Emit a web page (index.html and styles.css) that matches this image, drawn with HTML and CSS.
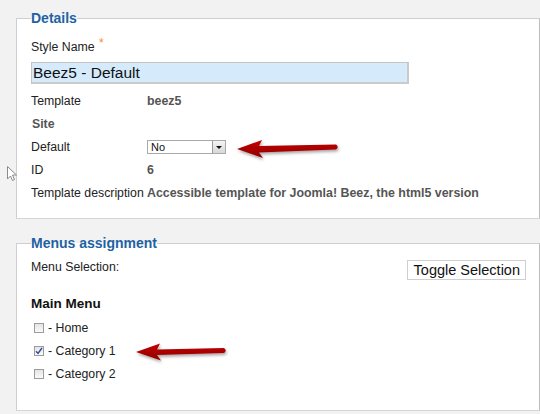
FILE: index.html
```html
<!DOCTYPE html>
<html>
<head>
<meta charset="utf-8">
<link rel="stylesheet" href="styles.css">
</head>
<body>
<div class="page">
  <fieldset class="box box-details">
    <legend>Details</legend>
    <div class="field-label">Style Name <span class="req">*</span></div>
    <div class="text-input">Beez5 - Default</div>
    <div class="grid">
      <div class="lbl">Template</div><div class="val">beez5</div>
      <div class="section">Site</div>
      <div class="lbl">Default</div>
      <div class="val">
        <div class="select"><span class="sel-text">No</span><span class="sel-btn"><span class="tri"></span></span></div>
      </div>
      <div class="lbl">ID</div><div class="val">6</div>
      <div class="lbl">Template description</div><div class="val">Accessible template for Joomla! Beez, the html5 version</div>
    </div>
  </fieldset>

  <fieldset class="box box-menus">
    <legend>Menus assignment</legend>
    <div class="sel-row">
      <div class="menu-sel">Menu Selection:</div>
      <div class="toggle">Toggle Selection</div>
    </div>
    <div class="menu-title">Main Menu</div>
    <ul class="items">
      <li><span class="cb"></span>- Home</li>
      <li><span class="cb checked"><svg width="8" height="8" viewBox="0 0 8 8"><path d="M1 4.2 L3 6.4 L7 1" fill="none" stroke="#2b4f9a" stroke-width="1.4"/></svg></span>- Category 1</li>
      <li><span class="cb"></span>- Category 2</li>
    </ul>
  </fieldset>
</div>

<svg class="overlay" width="540" height="414" viewBox="0 0 540 414">
  <defs>
    <linearGradient id="red" x1="0" y1="0" x2="0" y2="1">
      <stop offset="0" stop-color="#c40000"/>
      <stop offset="1" stop-color="#8f0000"/>
    </linearGradient>
    <filter id="sh" x="-20%" y="-50%" width="140%" height="200%">
      <feDropShadow dx="1" dy="2" stdDeviation="1.5" flood-color="#000" flood-opacity="0.35"/>
    </filter>
  </defs>
  <path d="M237,149 L262,140 L259,146 L336,144.5 Q339.5,147 336,149.5 L259,152.5 L263,158 Z" fill="url(#red)" filter="url(#sh)"/>
  <path d="M136,352 L160,343.5 L157,349.5 L224,348 Q227.5,350.5 224,353 L157,355 L161,360.5 Z" fill="url(#red)" filter="url(#sh)"/>
  <path d="M7.5,166.5 L7.5,179 L10.5,176 L12.5,180.5 L14.5,179.5 L12.5,175 L16.5,175 Z" fill="#fff" stroke="#8a8a8a" stroke-width="1" stroke-linejoin="round"/>
</svg>
</body>
</html>
```

FILE: styles.css
```css
html, body {
  margin: 0;
  padding: 0;
}
body {
  background: #f2f2f2;
  font-family: "Liberation Sans", Arial, sans-serif;
  color: #222;
  width: 540px;
  height: 414px;
  overflow: hidden;
  position: relative;
}
.page {
  padding: 10px 0 0 16px;
}
.box {
  margin: 0;
  background: #fff;
  border: 1px solid #cfcfcf;
  border-right-color: #bdbdbd;
  border-bottom-color: #d6d6d6;
  padding: 0 13px 0 14px;
  min-inline-size: 0;
}
.box legend {
  padding: 0;
  font-size: 14px;
  line-height: 16px;
  font-weight: bold;
  color: #1f62a3;
}
.box-details {
  padding-bottom: 14px;
}
.field-label {
  margin-top: 13px;
  font-size: 12.3px;
  line-height: 16px;
  color: #222;
}
.req {
  color: #f0922a;
  font-size: 12px;
  position: relative;
  top: -4px;
  margin-left: 1px;
}
.text-input {
  margin-top: 7px;
  width: 378px;
  height: 22px;
  box-sizing: border-box;
  background: #d5ebfc;
  border: 1px solid #c4c4c4;
  border-right: 2px solid #cacaca;
  border-bottom: 2px solid #cacaca;
  font-size: 15.5px;
  line-height: 19px;
  padding-left: 1px;
  color: #111;
}
.grid {
  margin-top: 5px;
  display: grid;
  grid-template-columns: 116px 1fr;
  grid-auto-rows: 23px;
  align-items: center;
  font-size: 12.3px;
}
.lbl {
  color: #222;
}
.val {
  font-weight: bold;
  color: #555;
  font-size: 12.4px;
}
.section {
  grid-column: 1 / span 2;
  font-weight: bold;
  color: #555;
  padding-left: 1px;
}
.select {
  width: 79px;
  height: 14px;
  box-sizing: border-box;
  border: 1px solid #a9a9a9;
  background: #fff;
  display: flex;
  justify-content: space-between;
  align-items: stretch;
  margin-top: 1px;
}
.sel-text {
  font-weight: normal;
  color: #111;
  font-size: 11px;
  line-height: 12px;
  padding-left: 3px;
}
.sel-btn {
  width: 12px;
  background: linear-gradient(#f4f4f4, #d8d8d8);
  border-left: 1px solid #9a9a9a;
  display: flex;
  align-items: center;
  justify-content: center;
}
.tri {
  width: 0;
  height: 0;
  border-left: 3px solid transparent;
  border-right: 3px solid transparent;
  border-top: 3px solid #111;
}
.box-menus {
  margin-top: 16px;
  padding-bottom: 25px;
}
.sel-row {
  margin-top: 8px;
  display: flex;
  justify-content: space-between;
  align-items: flex-start;
}
.menu-sel {
  font-size: 12.3px;
  line-height: 16px;
  color: #222;
}
.toggle {
  margin-top: 1px;
  height: 20px;
  box-sizing: border-box;
  border: 1px solid #cfcfcf;
  background: #fff;
  font-size: 14.5px;
  line-height: 18px;
  padding: 0 5px 0 6px;
  color: #111;
}
.menu-title {
  margin-top: 16px;
  font-size: 13.5px;
  line-height: 16px;
  font-weight: bold;
  color: #111;
}
.items {
  list-style: none;
  margin: 4px 0 0 0;
  padding: 0;
}
.items li {
  height: 23px;
  display: flex;
  align-items: center;
  font-size: 12.3px;
  color: #222;
  padding-left: 3px;
}
.cb {
  width: 10px;
  height: 10px;
  box-sizing: border-box;
  border: 1px solid #9c9c9c;
  background: linear-gradient(#e4e4e4, #fafafa);
  margin-right: 4px;
  display: flex;
  align-items: center;
  justify-content: center;
}
.cb svg {
  display: block;
}
.overlay {
  position: absolute;
  left: 0;
  top: 0;
  pointer-events: none;
}
```
